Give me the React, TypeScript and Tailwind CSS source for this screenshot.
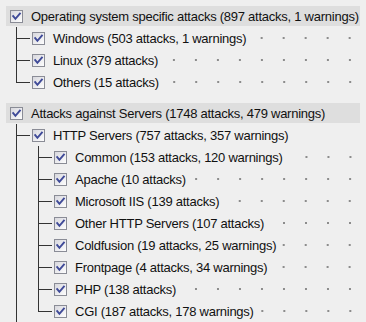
import React from "react";

type Guide = "pipe" | "tee" | "elbow";
type Row = { label: string; level: number; guides: Guide[]; leaf: boolean; gapBefore?: boolean };

const rows: Row[] = [
  { label: "Operating system specific attacks (897 attacks, 1 warnings)", level: 0, guides: [], leaf: false },
  { label: "Windows (503 attacks, 1 warnings)", level: 1, guides: ["tee"], leaf: true },
  { label: "Linux (379 attacks)", level: 1, guides: ["tee"], leaf: true },
  { label: "Others (15 attacks)", level: 1, guides: ["elbow"], leaf: true },
  { label: "Attacks against Servers (1748 attacks, 479 warnings)", level: 0, guides: [], leaf: false, gapBefore: true },
  { label: "HTTP Servers (757 attacks, 357 warnings)", level: 1, guides: ["tee"], leaf: false },
  { label: "Common (153 attacks, 120 warnings)", level: 2, guides: ["pipe", "tee"], leaf: true },
  { label: "Apache (10 attacks)", level: 2, guides: ["pipe", "tee"], leaf: true },
  { label: "Microsoft IIS (139 attacks)", level: 2, guides: ["pipe", "tee"], leaf: true },
  { label: "Other HTTP Servers (107 attacks)", level: 2, guides: ["pipe", "tee"], leaf: true },
  { label: "Coldfusion (19 attacks, 25 warnings)", level: 2, guides: ["pipe", "tee"], leaf: true },
  { label: "Frontpage (4 attacks, 34 warnings)", level: 2, guides: ["pipe", "tee"], leaf: true },
  { label: "PHP (138 attacks)", level: 2, guides: ["pipe", "tee"], leaf: true },
  { label: "CGI (187 attacks, 178 warnings)", level: 2, guides: ["pipe", "elbow"], leaf: true },
];

function Check() {
  return (
    <svg width="13" height="13" viewBox="0 0 13 13" className="shrink-0">
      <defs>
        <linearGradient id="cbg" x1="0" y1="0" x2="1" y2="1">
          <stop offset="0" stopColor="#d6d6dc" />
          <stop offset="1" stopColor="#ffffff" />
        </linearGradient>
      </defs>
      <rect x="0.5" y="0.5" width="12" height="12" fill="url(#cbg)" stroke="#8a8c96" />
      <path d="M3.2 6.2 L5.4 8.8 L9.9 3.6" stroke="#3f4a98" strokeWidth="1.9" fill="none" strokeLinecap="square" />
    </svg>
  );
}

function GuideCell({ kind }: { kind: Guide }) {
  return (
    <svg width="22" height="22" className="shrink-0 overflow-visible" shapeRendering="crispEdges">
      <line x1="11.5" y1="0" x2="11.5" y2={kind === "elbow" ? 11.5 : 22} stroke="#333333" strokeWidth="1" />
      {kind !== "pipe" && <line x1="11" y1="11.5" x2="25" y2="11.5" stroke="#333333" strokeWidth="1" />}
    </svg>
  );
}

const font = { fontFamily: '"Liberation Sans", Arial, sans-serif' };

export default function App() {
  return (
    <div
      className="w-[366px] h-[322px] overflow-hidden bg-[#efefef] pt-[5px] text-[13px] tracking-[-0.25px] text-[#111]"
      style={font}
    >
      {rows.map((r, i) =>
        r.level === 0 ? (
          <div key={i} className={`h-[22px] py-px pl-[6px] pr-[6px] ${r.gapBefore ? "mt-[9px]" : ""}`}>
            <div className="flex h-[20px] items-center bg-[#dedede]">
              <div className="ml-[4px] flex items-center">
                <Check />
              </div>
              <span className="ml-[8px] whitespace-nowrap leading-none">{r.label}</span>
            </div>
          </div>
        ) : (
          <div key={i} className="flex h-[22px] items-center pl-[5px]">
            {r.guides.map((g, j) => (
              <GuideCell key={j} kind={g} />
            ))}
            <div className="flex w-[22px] shrink-0 items-center pl-[5px]">
              <Check />
            </div>
            <span className="ml-[4px] whitespace-nowrap leading-none">{r.label}</span>
            {r.leaf ? (
              <div className="ml-[3px] h-[22px] flex-1 bg-[radial-gradient(circle,#8c8c8c_0.9px,transparent_1.3px)] bg-[length:22px_22px] bg-[position:right_5px_center] bg-repeat-x" />
            ) : (
              <div className="flex-1" />
            )}
          </div>
        )
      )}
    </div>
  );
}
